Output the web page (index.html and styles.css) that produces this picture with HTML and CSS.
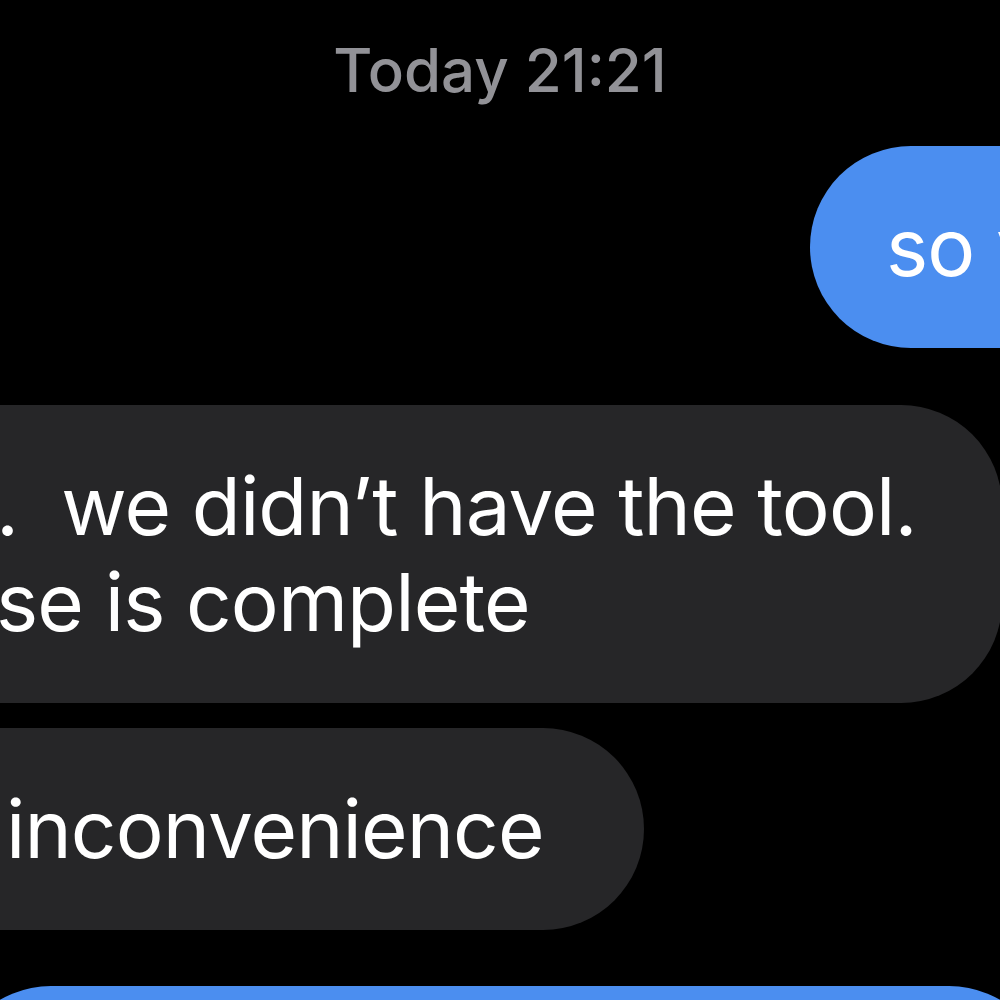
FILE: index.html
```html
<!DOCTYPE html>
<html lang="en">
<head>
<meta charset="utf-8">
<title>Messages</title>
<link rel="stylesheet" href="styles.css">
</head>
<body>
<main class="thread">
  <div class="stamp">Today 21:21</div>
  <div class="bubble sent first"><div class="line">so you</div></div>
  <div class="bubble recv long">
    <div class="line">.  we didn’t have the tool.</div>
    <div class="line">se is complete</div>
  </div>
  <div class="bubble recv short">
    <div class="line">inconvenience</div>
  </div>
  <div class="bubble sent last"></div>
</main>
</body>
</html>
```
FILE: styles.css
```css
html, body {
  margin: 0;
  padding: 0;
  background: #000;
}
body {
  width: 1000px;
  height: 1000px;
  overflow: hidden;
  font-family: "Inter", "Roboto", "Liberation Sans", sans-serif;
  color: #fff;
}
.thread {
  display: flex;
  flex-direction: column;
  align-items: flex-start;
}
.stamp {
  align-self: stretch;
  text-align: center;
  padding-top: 34px;
  font-size: 60px;
  line-height: 72px;
  font-weight: 500;
  color: #929297;
}
.bubble {
  box-sizing: border-box;
  font-size: 80px;
  letter-spacing: -0.9px;
  line-height: 96px;
  padding-top: 53px;
  padding-bottom: 53px;
  border-radius: 101px;
}
.line {
  white-space: pre;
}
.sent {
  background: #4b8ef0;
}
.recv {
  background: #262628;
}
.first {
  margin-top: 40px;
  margin-left: 810px;
  padding-left: 76px;
  padding-right: 80px;
}
.long {
  margin-top: 57px;
  margin-left: -200px;
  width: 1202px;
  padding-left: 196px;
}
.short {
  margin-top: 25px;
  margin-left: -200px;
  padding-left: 206px;
  padding-right: 100px;
}
.last {
  margin-top: 56px;
  margin-left: -50px;
  width: 1100px;
  height: 202px;
}
```
